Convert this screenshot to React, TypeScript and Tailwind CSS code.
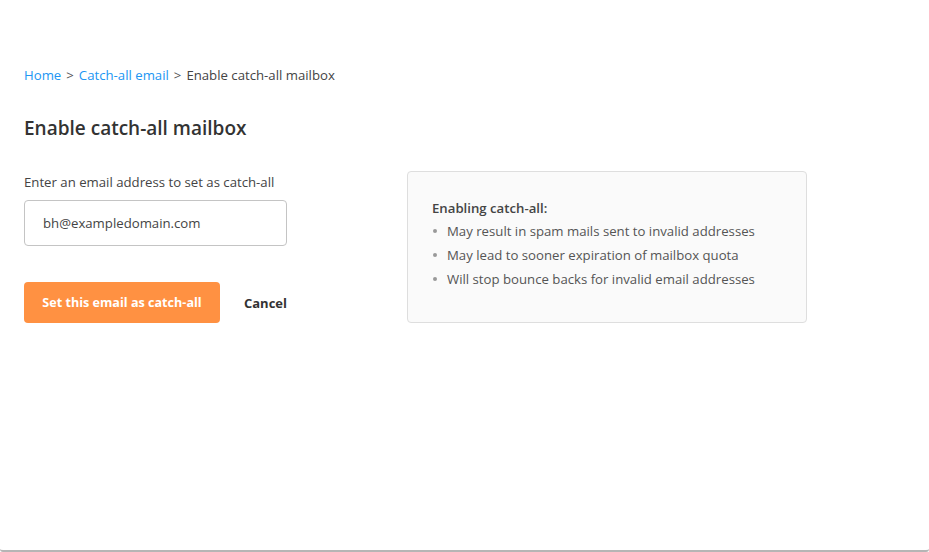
export default function App() {
  const risks = [
    'May result in spam mails sent to invalid addresses',
    'May lead to sooner expiration of mailbox quota',
    'Will stop bounce backs for invalid email addresses',
  ]

  return (
    <div
      className="h-[552px] w-[929px] overflow-hidden rounded-b-[3px] border-b-2 border-[#b5b5b5] bg-white text-[13.2px] text-[#444]"
      style={{ fontFamily: '"Open Sans", "Noto Sans", sans-serif' }}
    >
      <div className="px-6 pt-[65px]">
        <nav className="flex items-center gap-[5px] leading-5">
          <a className="text-[#2196f3]">Home</a>
          <span className="text-[#555]">&gt;</span>
          <a className="text-[#2196f3]">Catch-all email</a>
          <span className="text-[#555]">&gt;</span>
          <span className="text-[#444]">Enable catch-all mailbox</span>
        </nav>

        <h1 className="mt-[31px] text-[19px] font-semibold leading-6 text-[#333]">
          Enable catch-all mailbox
        </h1>

        <div className="mt-[31px] flex items-start">
          <div className="w-[263px] pt-[1px]">
            <label className="block leading-5 text-[#444]">
              Enter an email address to set as catch-all
            </label>
            <input
              defaultValue="bh@exampledomain.com"
              className="mt-[8px] h-[46px] w-[263px] rounded-[4px] border border-[#c4c4c4] px-[18px] text-[13.2px] text-[#444] outline-none"
            />
            <div className="mt-[36px] flex items-center">
              <button className="h-[41px] w-[196px] rounded-[4px] bg-[#ff9142] pt-[2px] text-[12.6px] font-bold text-white">
                Set this email as catch-all
              </button>
              <button className="ml-6 pt-[2px] text-[13px] font-bold text-[#333]">Cancel</button>
            </div>
          </div>

          <div className="ml-[120px] h-[152px] w-[400px] rounded-[4px] border border-[#dedede] bg-[#fafafa] px-6 pt-[25px]">
            <p className="font-semibold leading-[22px] text-[#444]">Enabling catch-all:</p>
            <ul>
              {risks.map((r) => (
                <li key={r} className="flex items-center leading-6 text-[#555]">
                  <span className="mr-[10px] ml-[1px] h-[4px] w-[4px] rounded-full bg-[#999]" />
                  {r}
                </li>
              ))}
            </ul>
          </div>
        </div>
      </div>
    </div>
  )
}
